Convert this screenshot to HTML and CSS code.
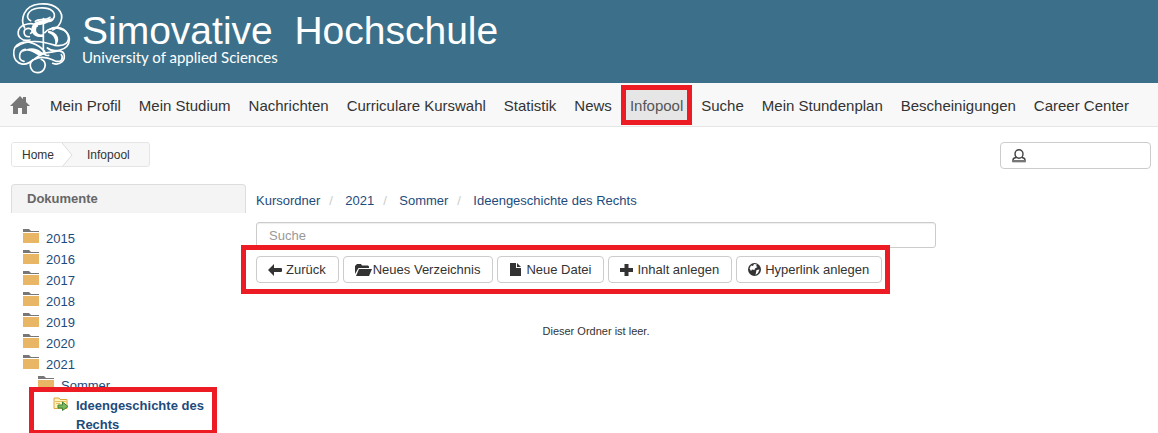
FILE: index.html
```html
<!DOCTYPE html>
<html lang="de">
<head>
<meta charset="utf-8">
<title>Simovative Hochschule – Infopool</title>
<link rel="stylesheet" href="styles.css">
</head>
<body>
<svg class="symbols" width="0" height="0" aria-hidden="true">
  <symbol id="folder" viewBox="0 0 16 14"><path fill="#777" d="M0 0h6l2 2h8v1H0z"/><path fill="#e9b665" d="M0 4h16v9.500q0 .5-.5.500h-15q-.5 0-.5-.5z"/></symbol>
</svg>
<header class="banner">
  <svg class="crest" viewBox="0 0 198 240" aria-hidden="true">
    <g fill="none" stroke="#fff" stroke-width="5" stroke-linecap="round">
      <path d="M62 62C44 54 52 28 86 24c40-4 54 16 44 32-8 12-26 10-26 2"/>
      <path d="M44 84C30 60 40 16 88 12c52-5 76 26 64 54-6 14-14 20-24 24"/>
      <path d="M60 120c-26 6-40-12-34-30 8-20 44-24 56-12"/>
      <path d="M58 110c-18 2-20-20-8-24 14-4 22 8 12 14"/>
      <path d="M100 56v94c0 14 8 18 16 16"/>
      <path d="M76 64c10-10 30 0 44-12"/>
      <path d="M20 140c34-24 76-16 116-4 30 4 44-10 38-30-6-22-36-30-54-18"/>
      <path d="M104 98c20-26 76-14 74 22-2 34-50 38-66 24"/>
      <path d="M36 192c-30-6-34-50-6-62 22-10 52 0 74 24"/>
      <path d="M42 184c-20-4-16-32 4-36"/>
      <path d="M36 192c28 6 44-32 76-34 22-2 44-12 50 4 6 20-14 36-34 28"/>
      <path d="M74 178c18-12 38-6 60 4 20 8 28-8 20-18"/>
      <path d="M68 180c-14 12-6 38 14 38 24 0 32-30 12-40"/>
    </g>
    <g fill="#fff">
      <path d="M74 68c14-8 28-6 54-14-8 14-26 20-44 22-14 18 0 32 18 26v8c-32 8-50-22-28-42z"/>
      <path d="M114 92c28 2 42 28 20 48 6-20-2-36-20-42z"/>
      <path d="M34 158c18-18 44-16 60-2 6 4 12 2 16 0-12 14-26 12-36 4-14-10-26-10-40-2z"/>
    </g>
  </svg>
  <div>
    <div class="brand">Simovative&nbsp; Hochschule</div>
    <div class="tagline">University of applied Sciences</div>
  </div>
</header>
<nav class="mainnav" aria-label="Hauptnavigation">
  <a class="home" href="#" aria-label="Startseite"><svg width="20" height="19" viewBox="0 0 20 19"><path fill="#777" d="M10 0l3 3V1h3v5l4 4h-3v8h-5v-6H8v6H3v-8H0z"/></svg></a>
  <a href="#">Mein Profil</a>
  <a href="#">Mein Studium</a>
  <a href="#">Nachrichten</a>
  <a href="#">Curriculare Kurswahl</a>
  <a href="#">Statistik</a>
  <a href="#">News</a>
  <a class="active marked" href="#" aria-current="page">Infopool</a>
  <a href="#">Suche</a>
  <a href="#">Mein Stundenplan</a>
  <a href="#">Bescheinigungen</a>
  <a href="#">Career Center</a>
</nav>
<div class="topline">
  <nav class="crumbs" aria-label="Pfad">
    <a href="#">Home</a>
    <svg width="11" height="24" viewBox="0 0 11 24" aria-hidden="true"><path fill="#fff" d="M0 0l10 12L0 24z"/><path fill="none" stroke="#ddd" d="M0 0l10 12L0 24"/></svg>
    <a href="#">Infopool</a>
  </nav>
  <button class="user" type="button" aria-label="Benutzer"><svg width="14" height="14" viewBox="0 0 14 14"><ellipse cx="7" cy="5" rx="4" ry="4.300" fill="none" stroke="#444" stroke-width="1.400"/><path fill="none" stroke="#444" stroke-width="1.400" d="M4 8.500Q1 9 1 11v1.500h12V11q0-2-3-2.500"/><path fill="#777" d="M1 11h12v2H1z"/></svg></button>
</div>
<main class="layout">
  <aside>
    <h2 class="panel-title">Dokumente</h2>
    <ul class="tree">
      <li><a href="#"><svg><use href="#folder"/></svg>2015</a></li>
      <li><a href="#"><svg><use href="#folder"/></svg>2016</a></li>
      <li><a href="#"><svg><use href="#folder"/></svg>2017</a></li>
      <li><a href="#"><svg><use href="#folder"/></svg>2018</a></li>
      <li><a href="#"><svg><use href="#folder"/></svg>2019</a></li>
      <li><a href="#"><svg><use href="#folder"/></svg>2020</a></li>
      <li><a href="#"><svg><use href="#folder"/></svg>2021</a>
        <ul>
          <li><a href="#"><svg><use href="#folder"/></svg>Sommer</a>
            <ul>
              <li class="current marked"><a href="#"><svg viewBox="0 0 16 14"><path fill="#fff3bd" stroke="#dca93e" d="M1 11.500V1h5l1 1.500h7v9z"/><path stroke="#e5bd5c" d="M2 4.500h11M3 6.500h4"/><path fill="#79b95c" stroke="#3f8137" d="M5 8h4.500V5l5.500 4.500-5.500 4V11H5z"/></svg>Ideengeschichte des Rechts</a></li>
            </ul>
          </li>
        </ul>
      </li>
    </ul>
  </aside>
  <section class="content">
    <nav class="path" aria-label="Ordnerpfad">
      <a href="#">Kursordner</a><span>/</span><a href="#">2021</a><span>/</span><a href="#">Sommer</a><span>/</span><a href="#">Ideengeschichte des Rechts</a>
    </nav>
    <input class="search" type="search" placeholder="Suche" aria-label="Suche">
    <div class="toolbar marked">
      <button type="button"><svg width="14" height="12" viewBox="0 0 14 12"><path fill="#333" d="M0 6l6-6v4h7q1 0 1 1v2q0 1-1 1H6v4z"/></svg>Zurück</button>
      <button class="tight" type="button"><svg width="17" height="12" viewBox="0 0 17 12"><path fill="#333" d="M0 10V2l1-1 1-1h4l1 1.500h6l1 1V4H3.500z"/><path fill="#333" d="M4 5h13l-3 7H1z"/></svg>Neues Verzeichnis</button>
      <button type="button"><svg width="13" height="13" viewBox="0 0 13 13"><path fill="#333" d="M1 0h6v5h5v8H1zM8 0l4 4H8z"/></svg>Neue Datei</button>
      <button type="button"><svg width="13" height="12" viewBox="0 0 13 12"><path fill="#333" d="M4.500 0h4v4H13v4H8.500v4h-4V8H0V4h4.500z"/></svg>Inhalt anlegen</button>
      <button type="button"><svg width="13" height="13" viewBox="0 0 13 13"><circle cx="6.500" cy="6.500" r="6.500" fill="#333"/><path fill="#fff" d="M6 1l3 .5-1 1.500 1.500 1L7 5.500l-.5 1.500L4 6.500 3 8 1.500 5.500 3 2.500 5 3zM8.500 7l3-.5L10 10l-2.500 2z"/></svg>Hyperlink anlegen</button>
    </div>
    <p class="empty">Dieser Ordner ist leer.</p>
  </section>
</main>
</body>
</html>
```

FILE: styles.css
```css
* { box-sizing: border-box; }
body {
  margin: 0;
  background: #fff;
  color: #333;
  font: 13px/20px "Liberation Sans", Arial, sans-serif;
}
a { color: #1d4b7c; text-decoration: none; }
button, input { font: inherit; color: inherit; }
ul { margin: 0; padding: 0; list-style: none; }
.symbols { position: absolute; }

.banner {
  display: flex;
  gap: 6px;
  height: 83px;
  padding-left: 10px;
  background: #3c708a;
  color: #fff;
}
.crest { width: 66px; height: 80px; }
.brand { padding-top: 13px; font-size: 39px; line-height: 36px; white-space: nowrap; }
.tagline { font: 15px/16px Lato, sans-serif; }

.mainnav {
  display: flex;
  padding: 2px 0 1px 2px;
  background: #f8f8f8;
  border-bottom: 1px solid #e5e5e5;
}
.mainnav a {
  padding: 0 9px;
  color: #333;
  font-size: 15px;
  line-height: 42px;
  height: 40px;
  white-space: nowrap;
}
.mainnav .home { display: flex; align-items: center; padding: 0 11px 0 8px; }
.mainnav .active { background: #e6e6e6; color: #555; }

/* Red frames that point out parts of the page */
.marked { position: relative; }
.marked::after {
  content: "";
  position: absolute;
  inset: 0;
  border: 5px solid #ed1c24;
  pointer-events: none;
}

.topline {
  display: flex;
  justify-content: space-between;
  align-items: flex-start;
  padding: 15px 7px 15px 11px;
}
.crumbs {
  display: flex;
  height: 25px;
  border: 1px solid #e5e5e5;
  border-radius: 3px;
  background: #f7f7f7;
  font-size: 12px;
  line-height: 24px;
  overflow: hidden;
}
.crumbs a { padding: 0 19px 0 14px; color: #333; }
.crumbs a:first-child { padding: 0 8px 0 10px; background: #fff; }
.user {
  display: flex;
  align-items: center;
  width: 151px;
  height: 27px;
  padding: 0 11px;
  border: 1px solid #ccc;
  border-radius: 4px;
  background: #fff;
}

.layout {
  display: grid;
  grid-template-columns: 235px minmax(0, 680px);
  gap: 10px;
  padding: 0 11px;
}
.panel-title {
  margin: 0 0 15px;
  padding: 0 15px;
  border: 1px solid #ddd;
  border-bottom: 0;
  border-radius: 4px 4px 0 0;
  background: #f4f4f4;
  color: #666;
  font-size: 13px;
  line-height: 28px;
}
.tree { padding-left: 12px; line-height: 21px; }
.tree ul { padding-left: 15px; }
.tree a { display: flex; gap: 7px; }
.tree svg { flex: none; width: 16px; height: 14px; margin-top: 1px; }
.tree .current { width: 159px; font-weight: bold; line-height: 19px; }
.tree .current::after { inset: -9px -5px -1px -24px; }

.path { display: flex; padding-top: 7px; }
.path span { width: 25px; padding-left: 9px; color: #ccc; }
.search {
  display: block;
  width: 100%;
  height: 26px;
  margin: 11px 0 0;
  padding: 0 12px;
  border: 1px solid #ccc;
  border-radius: 3px;
  background: #fff;
  box-shadow: inset 0 1px 1px #eee;
}
.search::placeholder { color: #999; opacity: 1; }
.toolbar { display: flex; gap: 4px; width: fit-content; margin-top: 8px; }
.toolbar::after { inset: -11px -8px -11px -15px; }
.toolbar button {
  display: flex;
  align-items: center;
  gap: 4px;
  height: 27px;
  padding: 0 12px 0 11px;
  border: 1px solid #ccc;
  border-radius: 4px;
  background: #fff;
  white-space: nowrap;
}
.toolbar .tight { gap: 1px; }
.empty { margin: 38px 0 0; font-size: 11px; text-align: center; }
```
